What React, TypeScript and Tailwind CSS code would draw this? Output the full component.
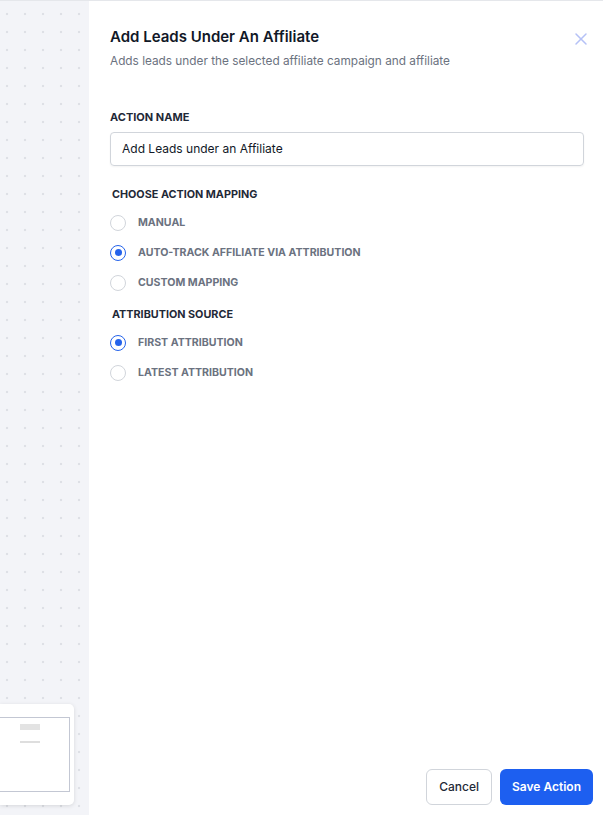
import { X } from "lucide-react";

const mapping = [
  { label: "Manual", checked: false },
  { label: "Auto-track affiliate via attribution", checked: true },
  { label: "Custom mapping", checked: false },
];

const sources = [
  { label: "First attribution", checked: true },
  { label: "Latest attribution", checked: false },
];

function Radio({ label, checked }: { label: string; checked: boolean }) {
  return (
    <label className="flex h-[30px] items-center gap-[12px]">
      <span
        className={
          checked
            ? "flex h-[16px] w-[16px] items-center justify-center rounded-full border-[1.5px] border-[#2563eb] bg-white"
            : "h-[16px] w-[16px] rounded-full border border-[#d1d5db] bg-white"
        }
      >
        {checked && <span className="h-[7px] w-[7px] rounded-full bg-[#2563eb]" />}
      </span>
      <span className="text-[10.6px] font-bold uppercase text-[#6b7280]">{label}</span>
    </label>
  );
}

export default function App() {
  return (
    <div className="flex h-[815px] w-[603px] border-t border-[#e5e7eb] font-['Inter',sans-serif]">
      {/* canvas side */}
      <div className="flex w-[89px] flex-col justify-end bg-[#f3f4f8] bg-[radial-gradient(circle,#dee0e6_1.3px,transparent_1.6px)] bg-[length:18px_18px] bg-[position:-2px_4px] pb-[10px]">
        <div className="h-[101px] w-[74px] rounded-r-[5px] bg-white pt-[13px] pr-[4px] shadow-[0_1px_4px_rgba(0,0,0,0.12)]">
          <div className="flex h-[75px] flex-col items-start border border-l-0 border-[#c3c7d3] pl-[20px] pt-[6px]">
            <div className="h-[6px] w-[20px] bg-[#e3e3e3]" />
            <div className="mt-[11px] h-[2px] w-[20px] bg-[#dedede]" />
          </div>
        </div>
      </div>

      {/* drawer */}
      <div className="flex flex-1 flex-col bg-white pl-[21px] pr-[10px]">
        <div className="flex items-start justify-between pt-[25px] pr-[2px]">
          <div>
            <h1 className="text-[15px] font-semibold leading-[22px] text-[#111827]">
              Add Leads Under An Affiliate
            </h1>
            <p className="mt-[4px] text-[11.8px] leading-[18px] text-[#6b7280]">
              Adds leads under the selected affiliate campaign and affiliate
            </p>
          </div>
          <button className="mt-[3px] text-[#b5c1f6]">
            <X size={20} strokeWidth={1.8} />
          </button>
        </div>

        <div className="mt-[39px] pr-[9px]">
          <div className="text-[11px] font-bold uppercase text-[#1f2937]">Action name</div>
          <input
            defaultValue="Add Leads under an Affiliate"
            className="mt-[6px] h-[34px] w-full rounded-[4px] border border-[#d1d5db] px-[11px] text-[12px] text-[#111827] shadow-[0_1px_2px_rgba(0,0,0,0.05)] outline-none"
          />
        </div>

        <div className="mt-[21px] pl-[2px]">
          <div className="text-[10.8px] font-bold uppercase text-[#1f2937]">Choose action mapping</div>
          <div className="mt-[5px] -ml-[2px] flex flex-col">
            {mapping.map((m) => (
              <Radio key={m.label} label={m.label} checked={m.checked} />
            ))}
          </div>
        </div>

        <div className="mt-[9px] pl-[2px]">
          <div className="text-[10.8px] font-bold uppercase text-[#1f2937]">Attribution source</div>
          <div className="mt-[5px] -ml-[2px] flex flex-col">
            {sources.map((s) => (
              <Radio key={s.label} label={s.label} checked={s.checked} />
            ))}
          </div>
        </div>

        <div className="mt-auto flex justify-end gap-[8px] pb-[10px]">
          <button className="h-[36px] rounded-[6px] border border-[#d1d5db] bg-white px-[12px] text-[12px] font-medium text-[#1f2937]">
            Cancel
          </button>
          <button className="h-[36px] rounded-[6px] bg-[#1d5ff0] px-[12px] text-[12px] font-semibold text-white">
            Save Action
          </button>
        </div>
      </div>
    </div>
  );
}
